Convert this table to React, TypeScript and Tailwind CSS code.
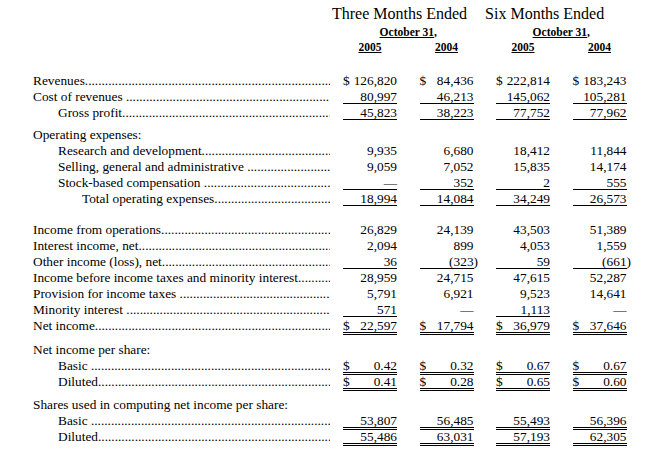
import clsx from "clsx";

type U = "" | "s" | "d";
type Row = { label: string; lvl?: number; v?: string[]; u?: U | U[] };

const DOTS = ".".repeat(160);

const sections: { gap: string; rows: Row[] }[] = [
  {
    gap: "mt-[20px]",
    rows: [
      { label: "Revenues", v: ["$ 126,820", "$ 84,436", "$ 222,814", "$ 183,243"] },
      { label: "Cost of revenues ", v: ["80,997", "46,213", "145,062", "105,281"], u: "s" },
      { label: "Gross profit", lvl: 1, v: ["45,823", "38,223", "77,752", "77,962"], u: "s" },
    ],
  },
  {
    gap: "mt-[6px]",
    rows: [
      { label: "Operating expenses:" },
      { label: "Research and development", lvl: 1, v: ["9,935", "6,680", "18,412", "11,844"] },
      { label: "Selling, general and administrative ", lvl: 1, v: ["9,059", "7,052", "15,835", "14,174"] },
      { label: "Stock-based compensation ", lvl: 1, v: ["\u2014", "352", "2", "555"], u: "s" },
      { label: "Total operating expenses", lvl: 2, v: ["18,994", "14,084", "34,249", "26,573"], u: "s" },
    ],
  },
  {
    gap: "mt-[15px]",
    rows: [
      { label: "Income from operations", v: ["26,829", "24,139", "43,503", "51,389"] },
      { label: "Interest income, net", v: ["2,094", "899", "4,053", "1,559"] },
      { label: "Other income (loss), net", v: ["36", "(323)", "59", "(661)"], u: "s" },
      { label: "Income before income taxes and minority interest", v: ["28,959", "24,715", "47,615", "52,287"] },
      { label: "Provision for income taxes ", v: ["5,791", "6,921", "9,523", "14,641"] },
      { label: "Minority interest ", v: ["571", "\u2014", "1,113", "\u2014"], u: ["s", "", "s", ""] },
      { label: "Net income", v: ["$ 22,597", "$ 17,794", "$ 36,979", "$ 37,646"], u: "d" },
    ],
  },
  {
    gap: "mt-[8px]",
    rows: [
      { label: "Net income per share:" },
      { label: "Basic ", lvl: 1, v: ["$ 0.42", "$ 0.32", "$ 0.67", "$ 0.67"], u: "d" },
      { label: "Diluted", lvl: 1, v: ["$ 0.41", "$ 0.28", "$ 0.65", "$ 0.60"], u: "d" },
    ],
  },
  {
    gap: "mt-[7px]",
    rows: [
      { label: "Shares used in computing net income per share:" },
      { label: "Basic ", lvl: 1, v: ["53,807", "56,485", "55,493", "56,396"], u: "d" },
      { label: "Diluted", lvl: 1, v: ["55,486", "63,031", "57,193", "62,305"], u: "d" },
    ],
  },
];

function Num({ n }: { n: string }) {
  // accounting style: closing paren hangs past the column edge
  if (n.endsWith(")")) {
    return (
      <span>
        {n.slice(0, -1)}
        <span className="-mr-[4.5px]">)</span>
      </span>
    );
  }
  return <span>{n}</span>;
}

function Cell({ v, u }: { v: string; u: U }) {
  const dollar = v.startsWith("$ ");
  const n = dollar ? v.slice(2) : v;
  return (
    <div
      className={clsx(
        "w-[54px] flex justify-between leading-[13px] whitespace-nowrap",
        u === "s" && "border-b border-black",
        u === "d" && "border-b-[3px] border-double border-black"
      )}
    >
      <span>{dollar ? "$" : ""}</span>
      <Num n={n} />
    </div>
  );
}

function Line({ r }: { r: Row }) {
  const pad = r.lvl === 2 ? "pl-[49px]" : r.lvl === 1 ? "pl-[25px]" : "pl-0";
  return (
    <div className="flex items-start h-[16px]">
      <div className={clsx("w-[297px] flex leading-[13px] whitespace-nowrap", pad)}>
        <span className="shrink-0 whitespace-pre">{r.label}</span>
        {r.v && <span className="flex-1 min-w-0 overflow-hidden">{DOTS}</span>}
      </div>
      {r.v && (
        <div className="ml-[13px] flex gap-[22.5px]">
          {r.v.map((v, i) => (
            <Cell key={i} v={v} u={(Array.isArray(r.u) ? r.u[i] : r.u) ?? ""} />
          ))}
        </div>
      )}
    </div>
  );
}

export default function App() {
  return (
    <div
      className="w-[648px] h-[471px] bg-white text-black text-[13.33px] overflow-hidden pl-[33px] pt-[4.5px]"
      style={{ fontFamily: '"Liberation Serif", "Times New Roman", serif' }}
    >
      {/* column headings */}
      <div className="flex text-[16px] leading-[18px]">
        <div className="w-[299px]" />
        <span>Three Months Ended</span>
        <span className="ml-[18px]">Six Months Ended</span>
      </div>
      <div className="flex mt-[2.5px] text-[11.5px] leading-[14px] font-bold">
        <div className="w-[310px]" />
        <div className="w-[130.5px] text-center">
          <span className="underline">October 31</span>,
        </div>
        <div className="w-[130.5px] ml-[22.5px] text-center">
          <span className="underline">October 31</span>,
        </div>
      </div>
      <div className="flex mt-px text-[11.5px] leading-[14px] font-bold">
        <div className="w-[310px]" />
        <div className="flex gap-[22.5px]">
          {["2005", "2004", "2005", "2004"].map((y, i) => (
            <div key={i} className="w-[54px] text-center">
              <span className="underline">{y}</span>
            </div>
          ))}
        </div>
      </div>

      {sections.map((s, i) => (
        <div key={i} className={s.gap}>
          {s.rows.map((r, j) => (
            <Line key={j} r={r} />
          ))}
        </div>
      ))}
    </div>
  );
}
